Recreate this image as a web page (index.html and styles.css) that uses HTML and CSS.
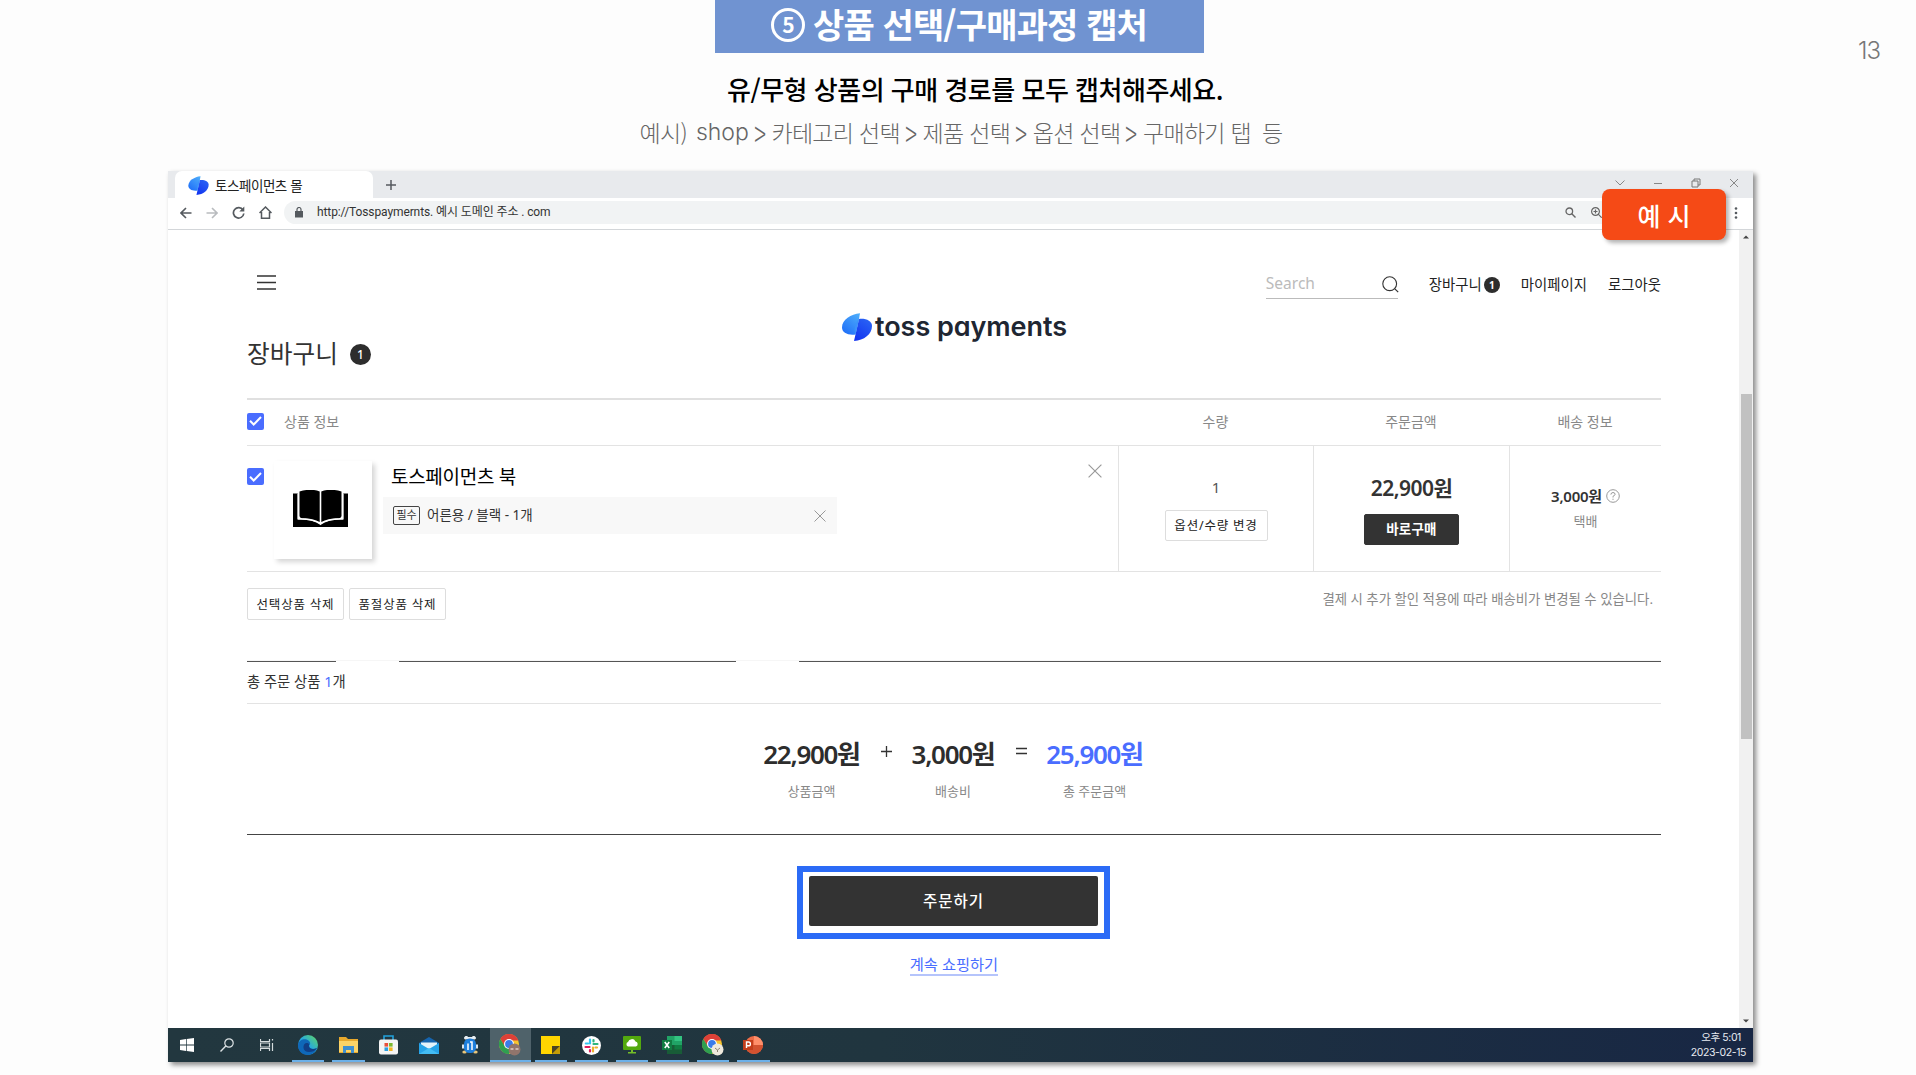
FILE: index.html
```html
<!DOCTYPE html>
<html lang="ko">
<head>
<meta charset="utf-8">
<title>상품 선택/구매과정 캡처</title>
<link rel="stylesheet" href="styles.css">
</head>
<body>
<svg class="defs" width="0" height="0" aria-hidden="true">
  <defs>
    <linearGradient id="wingL" x1="1" y1="0" x2="0.3" y2="1"><stop offset="0" stop-color="#4fb0fb"/><stop offset="1" stop-color="#2272f8"/></linearGradient>
    <linearGradient id="wingR" x1="0.8" y1="0" x2="0.2" y2="1"><stop offset="0" stop-color="#2a63f4"/><stop offset="1" stop-color="#1234f0"/></linearGradient>
    <linearGradient id="edge" x1="0" y1="1" x2="1" y2="0"><stop offset="0" stop-color="#0f6fc4"/><stop offset=".5" stop-color="#28a9dc"/><stop offset="1" stop-color="#62d95b"/></linearGradient>
    <symbol id="toss" viewBox="0 0 30 28">
      <path d="M18 .3C9 1.200 0 6.500 0 14.500c0 5 6 8.200 13.500 7L17 6z" fill="url(#wingL)"/>
      <path d="M17 6c7-.8 13 2 13 7 0 8-8 14.500-18 15z" fill="url(#wingR)"/>
      <path d="M18 .3 17 6l-3.500 15.500c-2-5 0-12 3.500-15.500z" fill="#3b92fb"/>
    </symbol>
    <symbol id="chrome" viewBox="0 0 22 22">
      <circle cx="10" cy="10" r="10" fill="#f7c52e"/>
      <path d="M1.300 5A10 10 0 0 1 18.700 5L19.300 6.500H10L6 13z" fill="#dd4038"/>
      <path d="M1.300 5A10 10 0 0 0 10 20l4-7.500H6z" fill="#2f9f50"/>
      <circle cx="10" cy="10" r="5" fill="#fff"/><circle cx="10" cy="10" r="3.900" fill="#3a7bea"/>
    </symbol>
    <symbol id="close" viewBox="0 0 12 12"><path d="M.5.5l11 11M11.500.5l-11 11" stroke="currentColor" fill="none"/></symbol>
  </defs>
</svg>

<header class="slide-head">
  <h1 class="slide-title"><span class="num">5</span><span>상품 선택/구매과정 캡처</span></h1>
  <p class="slide-lead">유/무형 상품의 구매 경로를 모두 캡처해주세요.</p>
  <p class="slide-path"><span>예시)</span><span class="lat">shop</span><i>&gt;</i><span>카테고리 선택</span><i>&gt;</i><span>제품 선택</span><i>&gt;</i><span>옵션 선택</span><i>&gt;</i><span>구매하기 탭</span><span class="etc">등</span></p>
  <span class="page-no">13</span>
</header>

<main class="window">
  <div class="tabs">
    <div class="tab"><svg width="21" height="19"><use href="#toss"/></svg><span>토스페이먼츠 몰</span></div>
    <svg class="plus" width="10" height="10" viewBox="0 0 10 10"><path d="M5 0v10M0 5h10" stroke="#555a5f" stroke-width="1.500"/></svg>
    <div class="win-ctl">
      <svg width="10" height="10" viewBox="0 0 10 10"><path d="M.5 2.500 5 7l4.500-4.500" fill="none" stroke="#888"/></svg>
      <svg width="10" height="10" viewBox="0 0 10 10"><path d="M1 5.500h8" stroke="#888"/></svg>
      <svg width="10" height="10" viewBox="0 0 10 10"><path d="M1 3h6v6H1zM3 3V1h6v6H7" fill="none" stroke="#777"/></svg>
      <svg width="10" height="10" viewBox="0 0 10 10"><path d="m1 1 8 8M9 1 1 9" stroke="#888"/></svg>
    </div>
  </div>
  <div class="toolbar">
    <svg width="12" height="12" viewBox="0 0 12 12"><path d="M11.500 6H1.500M6 1 1 6l5 5" fill="none" stroke="#555a5f" stroke-width="1.600"/></svg>
    <svg width="12" height="12" viewBox="0 0 12 12"><path d="M.5 6h10M6 1l5 5-5 5" fill="none" stroke="#b9bcbf" stroke-width="1.600"/></svg>
    <svg width="13" height="13" viewBox="0 0 13 13"><path d="M11 4a5.200 5.200 0 1 0 .8 3.500" fill="none" stroke="#555a5f" stroke-width="1.700"/><path d="M12.300.5v5h-5z" fill="#555a5f"/></svg>
    <svg width="13" height="13" viewBox="0 0 13 13"><path d="M.5 7 6.500 1l6 6M2.500 6v6.200h8V6" fill="none" stroke="#555a5f" stroke-width="1.500"/></svg>
    <div class="omni">
      <svg width="8" height="11" viewBox="0 0 8 11"><path d="M0 4h8v6.500H0z" fill="#555a5f"/><path d="M2 4V2.500a2 2 0 0 1 4 0V4" fill="none" stroke="#555a5f" stroke-width="1.200"/></svg>
      <span class="url">http://Tosspaymernts. 예시 도메인 주소 . com</span>
      <svg width="11" height="11" viewBox="0 0 11 11"><circle cx="4.300" cy="4.300" r="3.300" fill="none" stroke="#666" stroke-width="1.300"/><path d="m6.800 6.800 3.700 3.700" stroke="#666" stroke-width="1.400"/></svg>
      <svg class="zoomin" width="11" height="11" viewBox="0 0 11 11"><circle cx="4.500" cy="4.500" r="3.900" fill="none" stroke="#666" stroke-width="1.200"/><path d="m7.200 7.200 3.500 3.500M4.500 2.500v4M2.500 4.500h4" stroke="#666" stroke-width="1.200"/></svg>
    </div>
    <svg class="dots" width="4" height="12" viewBox="0 0 4 12"><g fill="#555a5f"><circle cx="2" cy="1.500" r="1.300"/><circle cx="2" cy="6" r="1.300"/><circle cx="2" cy="10.500" r="1.300"/></g></svg>
  </div>

  <div class="view">
    <div class="shop">
      <div class="topbar">
        <svg class="menu" width="19" height="15" viewBox="0 0 19 15"><path d="M0 1h19M0 7.500h19M0 14h19" stroke="#333" stroke-width="1.400"/></svg>
        <div class="search"><span>Search</span><svg width="17" height="17" viewBox="0 0 17 17"><circle cx="7.700" cy="7.700" r="6.900" fill="none" stroke="#333" stroke-width="1.100"/><path d="m12.600 12.600 3.600 3.600" stroke="#333" stroke-width="1.200"/></svg></div>
        <nav class="nav"><a>장바구니<b class="dot">1</b></a><a>마이페이지</a><a>로그아웃</a></nav>
      </div>
      <div class="brand"><svg width="30" height="28"><use href="#toss"/></svg><span>toss payments</span></div>
      <h2 class="cart-title">장바구니<b class="dot big">1</b></h2>

      <section class="cart">
        <div class="row head">
          <div class="info"><span class="check"><svg width="13" height="10" viewBox="0 0 13 10"><path d="M1 4.800 4.700 8.500 12 1" fill="none" stroke="#fff" stroke-width="2"/></svg></span><span class="label">상품 정보</span></div>
          <div>수량</div><div>주문금액</div><div>배송 정보</div>
        </div>
        <div class="row item">
          <div class="info">
            <span class="check"><svg width="13" height="10" viewBox="0 0 13 10"><path d="M1 4.800 4.700 8.500 12 1" fill="none" stroke="#fff" stroke-width="2"/></svg></span>
            <div class="thumb"><svg width="55" height="37" viewBox="0 0 55 37"><path d="M0 3.500h5v26c6 0 17 .5 22.500 5 5.500-4.500 16.500-5 22.500-5v-26h5V37H0z"/><path d="M6.500 1.500Q18-2 26.700 1.500V32Q20 28 9 28.200 6.500 28 6.500 26zM28.300 1.500Q37-2 48.500 1.500V26q0 2-2.500 2.200Q35 28 28.300 32z"/><path d="M5 3.500v25.300q16 0 22.500 5.500 6.500-5.500 22.500-5.500V3.500" fill="none" stroke="#fff" stroke-width="1.300"/></svg></div>
            <div class="detail">
              <div class="name">토스페이먼츠 북</div>
              <div class="option"><span class="tag">필수</span><span class="opt-text">어른용 / 블랙 - 1개</span><svg width="12" height="12"><use href="#close"/></svg></div>
            </div>
            <svg class="remove" width="14" height="14"><use href="#close"/></svg>
          </div>
          <div class="cell qty"><span>1</span><button class="btn">옵션/수량 변경</button></div>
          <div class="cell price"><strong>22,900원</strong><button class="btn dark">바로구매</button></div>
          <div class="cell ship"><span class="fee">3,000원<svg width="14" height="14" viewBox="0 0 14 14"><circle cx="7" cy="7" r="6.300" fill="none" stroke="#999"/><path d="M4.900 5.600Q5 3.500 7 3.500t2.100 1.800Q9 6.500 7 7.300V8.500M7 9.700v1.200" fill="none" stroke="#999"/></svg></span><span class="by">택배</span></div>
        </div>
        <div class="after"><button class="btn">선택상품 삭제</button><button class="btn">품절상품 삭제</button><p>결제 시 추가 할인 적용에 따라 배송비가 변경될 수 있습니다.</p></div>
      </section>

      <section class="summary">
        <div class="rule"><i></i><i></i><i></i></div>
        <div class="count">총 주문 상품 <em>1</em>개</div>
        <div class="sums">
          <div class="sum"><strong>22,900원</strong><span>상품금액</span></div>
          <svg class="op" width="11" height="11" viewBox="0 0 11 11"><path d="M5.500 0v11M0 5.500h11" stroke="#333" stroke-width="1.300"/></svg>
          <div class="sum mid"><strong>3,000원</strong><span>배송비</span></div>
          <svg class="op" width="11" height="11" viewBox="0 0 11 11"><path d="M0 2.500h11M0 7.500h11" stroke="#333" stroke-width="1.300"/></svg>
          <div class="sum total"><strong>25,900원</strong><span>총 주문금액</span></div>
        </div>
      </section>

      <div class="actions"><div class="focus"><button class="order">주문하기</button></div><a class="more">계속 쇼핑하기</a></div>
    </div>
    <div class="scroll"><svg width="6" height="4" viewBox="0 0 6 4"><path d="M0 3.500 3 .5l3 3z" fill="#444"/></svg><div class="thumb-bar"></div><svg width="6" height="4" viewBox="0 0 6 4"><path d="M0 .5 3 3.500l3-3z" fill="#444"/></svg></div>
  </div>

  <footer class="taskbar">
    <div class="t start"><svg width="14" height="14" viewBox="0 0 14 14" fill="#fff"><path d="M0 2l6-1v5.600H0zM6.700.9 14 0v6.600H6.700zM0 7.400h6V13l-6-1zM6.700 7.400H14V14l-7.300-1z"/></svg></div>
    <div class="t"><svg width="14" height="14" viewBox="0 0 14 14"><circle cx="9" cy="5" r="4.200" fill="none" stroke="#dde3e5" stroke-width="1.200"/><path d="M5.800 8 .5 13.500" stroke="#dde3e5" stroke-width="1.400"/></svg></div>
    <div class="t"><svg width="14" height="14" viewBox="0 0 14 14"><path d="M.5 1v2.500h9V1M.5 13v-2.500h9V13M.5 5h9v4h-9zM12.500 1v1.500M12.500 5v8" fill="none" stroke="#d5dcde" stroke-width="1.200"/></svg></div>
    <div class="t on"><svg width="20" height="20" viewBox="0 0 20 20"><circle cx="10" cy="10" r="10" fill="url(#edge)"/><path d="M0 10C1 4 8 3 11 6c2 2 1 4 0 4.500 0 3 4 4.500 8 2.500C17 18 13 20 10 20 4 20 0 16 0 10z" fill="#0f68b8"/><path d="M5.500 13C5 9 8 7 10.500 8.500c1 1 .5 2 .5 2.500 0 3 4 4 8 2-2 3-5 4-8 4s-5-1.500-5.500-4z" fill="#113f86"/></svg></div>
    <div class="t on"><svg width="19" height="16" viewBox="0 0 19 16"><path d="M0 0h7l2 2h10v14H0z" fill="#e8a92d"/><path d="M0 4h19v11H0z" fill="#fbd367"/><path d="M4 16V9h11v7h-3v-3H7v3z" fill="#3e8fd0"/></svg></div>
    <div class="t"><svg width="19" height="20" viewBox="0 0 19 20"><path d="M5 5V1h9v4" fill="none" stroke="#22a2dc" stroke-width="1.600"/><rect y="4.500" width="19" height="15" rx="2" fill="#f4f4f4"/><path d="M5.500 8h3.600v3.600H5.500z" fill="#e9503a"/><path d="M10 8h3.600v3.600H10z" fill="#7cb82f"/><path d="M5.500 12.400h3.600V16H5.500z" fill="#2b9fe0"/><path d="M10 12.400h3.600V16H10z" fill="#f4b421"/></svg></div>
    <div class="t"><svg width="20" height="17" viewBox="0 0 20 17"><path d="M0 6 10 0l10 6v11H0z" fill="#1564ae"/><path d="M2 5.500h16V12H2z" fill="#e4f3fb"/><path d="M0 6l10 6 10-6v11H0z" fill="#26a3e8"/><path d="M0 17l10-6 10 6z" fill="#44bdf4"/></svg></div>
    <div class="t"><svg width="16" height="18" viewBox="0 0 16 18"><path d="M3 3.500a2 2 0 1 1 3-2.500h4a2 2 0 1 1 3 2.500" fill="#e8eef2"/><path d="M0 8.500h3v4H0zM13 8.500h3v4h-3z" fill="#dfe7ee"/><ellipse cx="2.500" cy="16" rx="2.200" ry="1.500" fill="#e9c67a"/><ellipse cx="13.500" cy="16" rx="2.200" ry="1.500" fill="#e9c67a"/><rect x="2" y="2.500" width="12" height="14.500" rx="5.500" fill="#1f7fdc"/><path d="M6 14V7.500M10 14V6H8" fill="none" stroke="#fff" stroke-width="1.500"/></svg></div>
    <div class="t on active"><svg width="22" height="22"><use href="#chrome"/><circle cx="15.500" cy="15.500" r="6" fill="#92756c"/><path d="M11.500 15h3M16.500 15h3" stroke="#cdb8b0" stroke-width="2"/></svg></div>
    <div class="t on"><svg width="19" height="18" viewBox="0 0 19 18"><path d="M0 0h19v10l-8 8H0z" fill="#ffd500"/><path d="M11 10h8l-8 8z" fill="#4a4322"/><path d="M19 10v8h-8z" fill="#c59c06"/></svg></div>
    <div class="t on"><svg width="19" height="19" viewBox="0 0 19 19"><circle cx="9.500" cy="9.500" r="9.500" fill="#fff"/><g fill="none" stroke-width="2.200" stroke-linecap="round"><path d="M8 3.500v4M3.800 7.500H6" stroke="#36c5f0"/><path d="M11.500 8h4M11.500 4v1.500" stroke="#2eb67d"/><path d="M11 11.500v4M13.500 11.500H15" stroke="#ecb22e"/><path d="M3.500 11H7.500M8 14v1.500" stroke="#e01e5a"/></g></svg></div>
    <div class="t on"><svg width="18" height="18" viewBox="0 0 18 18"><rect width="18" height="14" rx="1" fill="#53a90e"/><path d="M8 14h2v2h3v1.500H5V16h3z" fill="#74bd28"/><path d="M5 10.500a2.400 2.400 0 0 1 0-4.500 4 4 0 0 1 7.500-.5 2.600 2.600 0 0 1 .5 5z" fill="#fff"/></svg></div>
    <div class="t on"><svg width="20" height="18" viewBox="0 0 20 18"><path d="M5 0h15v18H5z" fill="#21a366"/><path d="M12.500 0H20v5h-7.500z" fill="#33c481"/><path d="M5 9h15v9H5z" fill="#185c37"/><path d="M12.500 9H20v4.500h-7.500z" fill="#107c41"/><path d="M0 4h10v10H0z" fill="#107c41"/><path d="m2.800 6 4.400 6M7.200 6l-4.400 6" stroke="#fff" stroke-width="1.600"/></svg></div>
    <div class="t on"><svg width="22" height="22"><use href="#chrome"/><circle cx="15.500" cy="15.500" r="6" fill="#efe9dd"/><path d="m13 14 2.500 2 2.500-2M15.500 16v2" stroke="#8c8370" fill="none"/></svg></div>
    <div class="t on"><svg width="20" height="18" viewBox="0 0 20 18"><circle cx="11" cy="9" r="9" fill="#ed6c47"/><path d="M11 0a9 9 0 0 1 9 9h-9z" fill="#ff8f6b"/><path d="M2 9h18a9 9 0 0 1-18 0z" fill="#d35230"/><path d="M0 4h10v10H0z" fill="#c43e1c"/><path d="M3.500 12V6h2a1.900 1.900 0 0 1 0 3.800h-2" fill="none" stroke="#fff" stroke-width="1.400"/></svg></div>
    <div class="clock"><span>오후 5:01</span><span>2023-02-15</span></div>
  </footer>
  <div class="sample">예 시</div>
</main>
</body>
</html>
```
FILE: styles.css
```css
* { box-sizing: border-box; }
body {
  margin: 0;
  width: 1916px;
  height: 1075px;
  overflow: hidden;
  background: #fdfdfd;
  color: #333;
  font-family: "Noto Sans", "Noto Sans CJK KR", sans-serif;
}
h1, h2, p { margin: 0; font-weight: 400; }
svg { display: block; flex: none; }
.defs { position: absolute; }
button { font: inherit; padding: 0; }

/* slide header */
.slide-head {
  position: relative;
  height: 171px;
  display: flex;
  flex-direction: column;
  align-items: center;
  font-family: "Noto Sans CJK KR", sans-serif;
  white-space: nowrap;
}
.slide-title {
  width: 489px;
  height: 53px;
  margin-left: 3px;
  padding: 0 1px 6px 0;
  background: #7093d1;
  color: #fff;
  display: flex;
  align-items: center;
  justify-content: center;
  gap: 8px;
  font-size: 34px;
  font-weight: 700;
  line-height: 47px;
  letter-spacing: -0.850px;
}
.num {
  width: 34px;
  height: 34px;
  margin-top: 2px;
  border: 3px solid #fff;
  border-radius: 50%;
  font-size: 21px;
  line-height: 27px;
  text-align: center;
}
.slide-lead {
  margin: 16px 0 0 34px;
  height: 40px;
  line-height: 40px;
  font-size: 26px;
  font-weight: 500;
  letter-spacing: -0.500px;
  color: #000;
}
.slide-path {
  margin: 3px 0 0 6px;
  height: 40px;
  display: flex;
  line-height: 40px;
  font-size: 23px;
  font-weight: 300;
  letter-spacing: -0.700px;
  color: #666;
}
.slide-path i { font-style: normal; margin: 0 6px 0 5px; transform: scale(.95, 1.600); }
.slide-path .lat { font-family: Inter, sans-serif; margin-left: 9px; letter-spacing: 0; }
.slide-path .etc { margin-left: 11px; }
.page-no {
  position: absolute;
  left: 1858px;
  top: 36px;
  font: 300 24px/30px Inter, sans-serif;
  letter-spacing: -1px;
  color: #777;
}

/* browser window */
.window {
  position: relative;
  margin-left: 168px;
  width: 1585px;
  height: 891px;
  display: flex;
  flex-direction: column;
  background: #fff;
  box-shadow: 3px 3px 5px rgba(0, 0, 0, .45);
}
.tabs { height: 27px; background: #e8eaed; display: flex; align-items: center; padding-left: 7px; }
.tab {
  width: 198px;
  height: 27px;
  padding: 2px 0 0 13px;
  display: flex;
  align-items: center;
  gap: 6px;
  background: #fff;
  border-radius: 7px 7px 0 0;
  font: 400 13.500px/24px "Noto Sans CJK KR", sans-serif;
  letter-spacing: -0.450px;
  color: #222;
}
.tab span { margin-top: -1px; }
.plus { margin-left: 13px; }
.win-ctl { margin: -3px 14px 0 auto; display: flex; gap: 28px; }
.toolbar {
  height: 32px;
  padding: 0 15px 2px 12px;
  display: flex;
  align-items: center;
  gap: 14px;
  border-bottom: 1px solid #d3d6d9;
}
.omni {
  flex: 1;
  margin-left: -2px;
  height: 23px;
  padding: 0 118px 0 11px;
  display: flex;
  align-items: center;
  background: #f1f3f4;
  border-radius: 12px;
}
.url {
  margin: -2px auto 0 14px;
  font: 400 12px/20px Roboto, "Noto Sans CJK KR", sans-serif;
  letter-spacing: -0.100px;
  color: #333;
}
.zoomin { margin-left: 15px; }
.sample {
  position: absolute;
  left: 1434px;
  top: 18px;
  width: 124px;
  height: 51px;
  border-radius: 8px;
  background: #f54a16;
  box-shadow: 3px 3px 4px rgba(0, 0, 0, .3);
  color: #fff;
  text-align: center;
  font: 500 25px/52px "Noto Sans CJK KR", sans-serif;
}

/* page viewport */
.view { flex: 1; display: flex; min-height: 0; }
.shop { flex: 1; padding: 37px 78px 0 79px; }
.scroll {
  width: 14px;
  background: #f1f1f1;
  display: flex;
  flex-direction: column;
  align-items: center;
  padding: 5px 0;
}
.thumb-bar { width: 11px; height: 345px; margin: 155px 0 auto; background: #c1c1c1; }
.topbar { height: 32px; display: flex; align-items: center; padding-left: 10px; }
.menu { margin-bottom: 1px; }
.search {
  margin-left: auto;
  width: 132px;
  height: 32px;
  padding-top: 1px;
  border-bottom: 1px solid #bbb;
  display: flex;
  align-items: center;
  justify-content: space-between;
  font-size: 15.500px;
  color: #bbb;
}
.search svg { margin: 3px -1px 0 0; }
.nav { display: flex; gap: 21px; margin-left: 31px; padding-top: 4px; font-size: 14.400px; line-height: 20px; color: #222; }
.nav a { display: flex; align-items: center; }
.dot {
  width: 16px;
  height: 16px;
  margin-left: 2px;
  border-radius: 50%;
  background: #2d2d2d;
  color: #fff;
  font: 700 10px/16px "Noto Sans", sans-serif;
  text-align: center;
}
.dot.big { width: 21px; height: 21px; margin-left: 12px; font: 500 12px/21px "Noto Sans", sans-serif; }
.brand { height: 28px; margin: 14px 0 0 595px; display: flex; align-items: center; gap: 3px; }
.brand span {
  font: 600 27px/28px Inter, sans-serif;
  font-feature-settings: "cv11";
  letter-spacing: -0.050px;
  color: #202632;
}
.cart-title { height: 36px; margin-top: -5px; display: flex; align-items: center; font-size: 24.700px; line-height: 36px; }

/* cart table */
.cart { margin-top: 26px; border-top: 2px solid #e0e0e0; }
.row { display: grid; grid-template-columns: 871px 195px 196px 152px; border-bottom: 1px solid #e3e3e3; }
.head { height: 46px; line-height: 44px; font-size: 14px; color: #888; text-align: center; }
.head .info { display: flex; align-items: center; }
.label { margin: -1px 0 0 20px; }
.check {
  width: 17px;
  height: 17px;
  border-radius: 2px;
  background: #4a6dff;
  display: flex;
  align-items: center;
  justify-content: center;
}
.head .check { margin-top: -3px; }
.item { height: 126px; }
.item .info { display: flex; align-items: flex-start; }
.item .check { margin-top: 22px; }
.thumb {
  width: 98px;
  height: 98px;
  margin: 15px 0 0 10px;
  display: flex;
  align-items: center;
  justify-content: center;
  background: #fff;
  box-shadow: 3px 3px 5px rgba(0, 0, 0, .17);
}
.thumb svg { margin: -4px 6px 0 0; }
.detail { margin: 17px 0 0 11px; width: 454px; }
.name { height: 28px; padding-left: 8px; font-size: 19px; line-height: 28px; color: #000; letter-spacing: -0.300px; }
.option {
  height: 37px;
  margin-top: 6px;
  padding: 0 11px 0 10px;
  display: flex;
  align-items: center;
  background: #f8f8f8;
}
.tag { width: 27px; height: 19px; border: 1px solid #444; border-radius: 2px; font-size: 11px; line-height: 16px; text-align: center; }
.opt-text { margin: -2px auto 0 7px; font-size: 13.500px; line-height: 20px; }
.option svg, .remove { color: #999; }
.remove { margin: 18px 0 0 251px; }
.cell { display: flex; flex-direction: column; align-items: center; border-left: 1px solid #e3e3e3; }
.btn {
  height: 31px;
  border: 1px solid #ddd;
  border-radius: 2px;
  background: #fff;
  color: #222;
  font-size: 12.500px;
  line-height: 28px;
  letter-spacing: .8px;
}
.qty span { margin: 30px 0 12px; font-size: 15px; line-height: 22px; color: #555; }
.qty .btn { width: 103px; }
.price strong { margin: 27px 0 11px; font-size: 21px; line-height: 30px; font-weight: 600; letter-spacing: -0.500px; }
.price .btn { width: 95px; }
.btn.dark { background: #333; border-color: #333; color: #fff; font-weight: 600; letter-spacing: 0.200px; font-size: 13.500px; line-height: 26px; padding-bottom: 2px; }
.fee { margin-top: 39px; display: flex; align-items: center; gap: 4px; font-size: 15px; line-height: 22px; font-weight: 600; letter-spacing: -0.250px; }
.by { margin-top: 4px; font-size: 13px; line-height: 20px; color: #888; }
.after { display: flex; gap: 5px; margin-top: 16px; }
.after .btn { width: 97px; height: 32px; padding-top: 1px; }
.after p { margin: 0 8px 0 auto; font-size: 13.400px; line-height: 22px; color: #888; }

/* order summary */
.summary { margin-top: 40px; border-bottom: 1px solid #444; }
.rule { display: flex; height: 2px; border-top: 1px solid #f6f6f6; }
.rule i { height: 1px; background: #555; width: 89px; }
.rule i:nth-child(2) { width: 337px; margin: 0 63px; }
.rule i:nth-child(3) { flex: 1; }
.count { height: 42px; border-bottom: 1px solid #e3e3e3; font-size: 14.350px; line-height: 39px; }
.count em { font-style: normal; color: #4a6dff; }
.sums { height: 130px; padding: 33px 0 0 516px; display: flex; }
.sum { width: 97px; display: flex; flex-direction: column; align-items: center; white-space: nowrap; }
.sum.mid { width: 84px; }
.sum strong { font-size: 26px; line-height: 34px; font-weight: 600; color: #2d2d2d; letter-spacing: -1.300px; }
.sum span { margin-top: 10px; font-size: 13px; line-height: 20px; color: #888; }
.sum.total strong { color: #4a6dff; }
.op { margin: 9px 19px 0 21px; }
.actions { display: flex; flex-direction: column; align-items: center; }
.focus { margin-top: 31px; width: 313px; height: 73px; border: 6px solid #2b6bf6; padding: 4px 6px; margin-right: 1px; }
.order {
  display: block;
  width: 289px;
  height: 50px;
  border: 0;
  border-radius: 2px;
  background: #333;
  color: #fff;
  font-size: 15.500px;
  font-weight: 500;
  line-height: 48px;
  letter-spacing: 1px;
}
.more { margin-top: 14px; height: 23px; border-bottom: 2px solid #b5c4fb; font-size: 15.300px; line-height: 23px; color: #4a6dff; }

/* taskbar */
.taskbar {
  height: 34px;
  display: flex;
  background: linear-gradient(90deg, #22373f 0%, #20353f 45%, #182744 100%);
}
.t { width: 40.500px; display: flex; align-items: center; justify-content: center; position: relative; }
.start { width: 38.500px; }
.t.active { background: #4f626a; }
.t.on::after { content: ""; position: absolute; left: 4px; right: 4px; bottom: 0; height: 2px; background: #6cb0e8; }
.t.active::after { left: 0; right: 0; }
.clock {
  margin-left: auto;
  padding: 2px 7px 0 0;
  width: 70px;
  font: 400 10.500px/15px Inter, "Noto Sans CJK KR", sans-serif;
  letter-spacing: -0.400px;
  display: flex;
  flex-direction: column;
  align-items: flex-end;
  color: #e8ecf2;
}
.clock span:first-child { padding-right: 5px; }
```
